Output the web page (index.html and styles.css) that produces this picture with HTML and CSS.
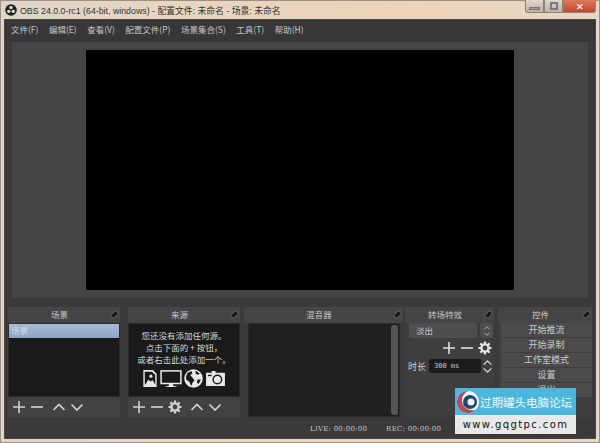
FILE: index.html
```html
<!DOCTYPE html>
<html lang="zh">
<head>
<meta charset="utf-8">
<title>OBS 24.0.0-rc1</title>
<link rel="stylesheet" href="styles.css">
</head>
<body>
<svg class="defs" width="0" height="0">
  <defs>
    <symbol id="i-plus" viewBox="0 0 14 14"><path d="M7 1v12M1 7h12" fill="none" stroke="currentColor" stroke-width="1.6"/></symbol>
    <symbol id="i-minus" viewBox="0 0 14 14"><path d="M1 7h12" fill="none" stroke="currentColor" stroke-width="1.6"/></symbol>
    <symbol id="i-up" viewBox="0 0 14 14"><path d="M1.5 10L7 4.5l5.500 5.500" fill="none" stroke="currentColor" stroke-width="1.7"/></symbol>
    <symbol id="i-down" viewBox="0 0 14 14"><path d="M1.500 4.500L7 10l5.500-5.500" fill="none" stroke="currentColor" stroke-width="1.700"/></symbol>
    <symbol id="i-gear" viewBox="0 0 14 14"><circle cx="7" cy="7" r="3.600" fill="none" stroke="currentColor" stroke-width="2.400"/><path d="M7 .5v3M7 10.500v3M.5 7h3M10.500 7h3M2.400 2.400l2.100 2.100M9.500 9.500l2.100 2.100M11.600 2.400L9.500 4.500M4.500 9.500l-2.100 2.100" stroke="currentColor" stroke-width="2.200"/></symbol>
    <symbol id="i-float" viewBox="0 0 8 8"><path d="M3 .8h4.200v4.200H5.500v2.200H.8V3H3z" fill="#111" stroke="#707070" stroke-width=".7"/></symbol>
  </defs>
</svg>
<div class="window">
  <header class="titlebar">
    <svg class="obs-logo" viewBox="0 0 14 14" width="12" height="12"><circle cx="7" cy="7" r="6.800" fill="#222"/><circle cx="7" cy="4.200" r="2" fill="#ddd"/><circle cx="4.400" cy="8.600" r="2" fill="#ddd"/><circle cx="9.600" cy="8.600" r="2" fill="#ddd"/></svg>
    <span class="title-text">OBS 24.0.0-rc1 (64-bit, windows) - 配置文件: 未命名 - 场景: 未命名</span>
    <div class="win-buttons">
      <span class="win-btn"><i class="glyph-min"></i></span>
      <span class="win-btn"><i class="glyph-max"></i></span>
      <span class="win-btn win-close">✕</span>
    </div>
  </header>
  <div class="client">
    <nav class="menubar">
      <span>文件(F)</span><span>编辑(E)</span><span>查看(V)</span><span>配置文件(P)</span><span>场景集合(S)</span><span>工具(T)</span><span>帮助(H)</span>
    </nav>
    <section class="preview-wrap"><div class="preview"></div></section>
    <section class="docks">
      <article class="dock dock-scene">
        <h2 class="dock-title">场景<svg class="float"><use href="#i-float"/></svg></h2>
        <div class="list">
          <div class="scene-item">场景</div>
        </div>
        <div class="toolbar">
          <svg class="tb"><use href="#i-plus"/></svg>
          <svg class="tb"><use href="#i-minus"/></svg>
          <svg class="tb tb-gap"><use href="#i-up"/></svg>
          <svg class="tb"><use href="#i-down"/></svg>
        </div>
      </article>
      <article class="dock dock-source">
        <h2 class="dock-title">来源<svg class="float"><use href="#i-float"/></svg></h2>
        <div class="list list-source">
          <p class="hint">您还没有添加任何源。<br>点击下面的 + 按钮，<br>或者右击此处添加一个。</p>
          <div class="src-icons">
            <svg viewBox="0 0 16 20" width="16" height="19"><path d="M1 1h10l4 4v14H1z" fill="#e8e8e8"/><path d="M2.500 16.500V3h7.500l3.500 3v10.500z" fill="#1a1a1a"/><path d="M2.500 17l4-6 2 2.500 2-2 3.500 5.500z" fill="#e8e8e8"/><circle cx="9" cy="7.500" r="1.600" fill="#e8e8e8"/></svg>
            <svg viewBox="0 0 24 20" width="22" height="18"><rect x="1" y="1" width="22" height="14" fill="none" stroke="#e8e8e8" stroke-width="1.700"/><path d="M10 15.500h4l1 2.500h3v1H6v-1h3z" fill="#e8e8e8"/></svg>
            <svg viewBox="0 0 18 18" width="19" height="19"><circle cx="9" cy="9" r="8.800" fill="#e8e8e8"/><path d="M3 4l4-2 1 2-2 2 2 2 2 3-2 2-1 3-2-4-3-2 0-3zM11 1.500l4 3-2 1-2-1zM13 10l3 0-2 4-2-1z" fill="#1a1a1a"/></svg>
            <svg viewBox="0 0 22 18" width="21" height="17"><path d="M1 3h6V1h4v2h10v14H1z" fill="#e8e8e8"/><circle cx="13" cy="10" r="4.500" fill="none" stroke="#1a1a1a" stroke-width="1.500"/><rect x="3" y="5" width="4" height="1.500" fill="#1a1a1a"/></svg>
          </div>
        </div>
        <div class="toolbar">
          <svg class="tb"><use href="#i-plus"/></svg>
          <svg class="tb"><use href="#i-minus"/></svg>
          <svg class="tb"><use href="#i-gear"/></svg>
          <svg class="tb tb-gap"><use href="#i-up"/></svg>
          <svg class="tb"><use href="#i-down"/></svg>
        </div>
      </article>
      <article class="dock dock-mixer">
        <h2 class="dock-title">混音器<svg class="float"><use href="#i-float"/></svg></h2>
        <div class="list list-mixer"><div class="scrollbar"></div></div>
      </article>
      <article class="dock dock-trans">
        <h2 class="dock-title">转场特效<svg class="float"><use href="#i-float"/></svg></h2>
        <div class="trans-body">
          <div class="select"><span class="select-text">淡出</span><span class="spin"><svg viewBox="0 0 8 14" width="8" height="12"><path d="M1 5l3-3 3 3M1 9l3 3 3-3" fill="none" stroke="#bbb" stroke-width="1"/></svg></span></div>
          <div class="trans-tools">
            <svg class="tb"><use href="#i-plus"/></svg>
            <svg class="tb"><use href="#i-minus"/></svg>
            <svg class="tb"><use href="#i-gear"/></svg>
          </div>
          <div class="duration">
            <span class="duration-label">时长</span>
            <span class="duration-input">300 ms</span>
            <span class="duration-spin"><svg viewBox="0 0 10 16" width="11" height="15"><path d="M1 6l4-4 4 4M1 10l4 4 4-4" fill="none" stroke="#ddd" stroke-width="1.300"/></svg></span>
          </div>
        </div>
      </article>
      <article class="dock dock-ctrl">
        <h2 class="dock-title">控件<svg class="float"><use href="#i-float"/></svg></h2>
        <div class="ctrl-body">
          <button class="ctrl-btn">开始推流</button>
          <button class="ctrl-btn">开始录制</button>
          <button class="ctrl-btn">工作室模式</button>
          <button class="ctrl-btn">设置</button>
          <button class="ctrl-btn">退出</button>
        </div>
      </article>
    </section>
    <footer class="status"><span class="live">LIVE: 00:00:00</span><span class="rec">REC: 00:00:00</span></footer>
  </div>
</div>
<aside class="watermark">
  <div class="wm-top">
    <svg viewBox="0 0 24 24" width="24" height="24"><circle cx="12" cy="12" r="11" fill="#f0f0f4"/><path d="M12 1a11 11 0 1 0 8 18.500A10 10 0 0 1 12 1z" fill="#b04a5c"/><circle cx="14" cy="12" r="7" fill="#1d4a6a"/><circle cx="15" cy="12" r="3.500" fill="#f0f0f4"/></svg>
    <span>过期罐头电脑论坛</span>
  </div>
  <div class="wm-bottom">www.gqgtpc.com</div>
</aside>
</body>
</html>
```

FILE: styles.css
```css
* { box-sizing: border-box; }
html, body { margin: 0; padding: 0; }
body {
  width: 600px;
  height: 443px;
  overflow: hidden;
  position: relative;
  font-family: "Noto Sans CJK SC", "Liberation Sans", sans-serif;
  background: #e6d4bd;
}
.defs { position: absolute; }
.window {
  width: 600px;
  height: 443px;
  display: flex;
  flex-direction: column;
  padding: 0 5px 5px 5px;
  background: linear-gradient(90deg, #dfd5c9 0%, #e8d5c0 30%, #eed4b8 70%, #e6d8c8 100%);
  box-shadow: inset 0 0 0 1px #9a9184;
}
.titlebar {
  height: 20px;
  flex: none;
  display: flex;
  align-items: center;
  gap: 3px;
  position: relative;
}
.obs-logo { flex: none; }
.title-text {
  font-family: "Liberation Sans", "Noto Sans CJK SC", sans-serif;
  font-size: 8.800px;
  color: #333;
  white-space: nowrap;
}
.win-buttons {
  position: absolute;
  right: -1px;
  top: 0;
  display: flex;
  height: 13px;
}
.win-btn {
  display: flex;
  align-items: center;
  justify-content: center;
  height: 13px;
  width: 19px;
  background: linear-gradient(#e2d6c9, #bdb3a8);
  border: 1px solid #8b8276;
  border-top: 0;
}
.win-btn:first-child { border-radius: 0 0 0 3px; }
.win-close {
  width: 33px;
  background: linear-gradient(#dd7a5f, #c4452e);
  color: #f4ece6;
  font-size: 9px;
  font-weight: 700;
  border-radius: 0 0 3px 0;
}
.glyph-min { width: 11px; height: 3px; margin-top: 4px; background: #9a9ca2; border: 1px solid #777; display: block; }
.glyph-max { width: 8px; height: 8px; border: 2px solid #7b7d84; display: block; }
.client {
  flex: 1;
  min-height: 0;
  display: flex;
  flex-direction: column;
  background: #3a3a3a;
  box-shadow: 0 0 0 1px #4b463f;
}
.menubar {
  height: 22px;
  flex: none;
  display: flex;
  align-items: center;
  gap: 10.500px;
  padding: 0 0 4px 6px;
  font-size: 8.500px;
  color: #c4c4c4;
  background: #373737;
}
.preview-wrap {
  height: 256px;
  flex: none;
  margin: 0 7px;
  background: #454545;
  display: flex;
  align-items: center;
  justify-content: center;
}
.preview { width: 428px; height: 240px; background: #000; }
.docks {
  flex: none;
  display: flex;
  height: 110px;
  margin-top: 9px;
  padding-left: 3px;
}
.dock { display: flex; flex-direction: column; flex: none; }
.dock-scene { width: 112px; margin-right: 8px; }
.dock-source { width: 112px; margin-right: 4px; }
.dock-mixer { width: 159px; margin-right: 2px; }
.dock-trans { width: 89px; margin-right: 4px; }
.dock-ctrl { width: 94px; }
.dock-title {
  height: 16px;
  flex: none;
  margin: 0;
  padding-right: 9px;
  font-size: 8.500px;
  font-weight: 400;
  line-height: 15px;
  color: #c8c8c8;
  background: #454545;
  text-align: center;
  position: relative;
}
.float { position: absolute; right: 2px; top: 4px; width: 7px; height: 7px; }
.list { flex: 1; min-height: 0; background: #1a1a1a; border: 1px solid #2c2c2c; }
.scene-item {
  height: 14px;
  padding-left: 2px;
  font-size: 8.500px;
  line-height: 13px;
  color: #cdd8ea;
  background: linear-gradient(#a9bdd8, #8ba2c2);
}
.list-source {
  display: flex;
  flex-direction: column;
  align-items: center;
  color: #dedede;
}
.hint {
  margin: 5px 0 0;
  font-size: 8.500px;
  line-height: 12px;
  text-align: center;
  color: #d6d6d6;
}
.src-icons { display: flex; align-items: center; gap: 2px; margin-top: 4px; }
.toolbar {
  height: 20px;
  flex: none;
  display: flex;
  align-items: center;
  gap: 4px;
  padding-left: 4px;
  background: #424242;
  color: #d2d2d2;
}
.tb { width: 14px; height: 14px; flex: none; color: #d2d2d2; }
.tb-gap { margin-left: 4px; }
.list-mixer {
  margin: 0 3px 0 4px;
  padding: 1px;
  display: flex;
  justify-content: flex-end;
  background: #202020;
}
.scrollbar { width: 7px; background: #555; border-radius: 3px; }
.trans-body { flex: 1; min-height: 0; background: #3e3e3e; padding: 0 1px 0 4px; }
.select {
  height: 15px;
  display: flex;
  align-items: center;
  font-size: 8.500px;
  color: #c6c6c6;
}
.select-text { flex: 1; background: #4d4d4d; height: 15px; line-height: 15px; padding-left: 7px; border-radius: 2px; margin-right: 3px; }
.spin { width: 13px; height: 15px; background: #4d4d4d; display: flex; align-items: center; justify-content: center; border-radius: 2px; }
.trans-tools { display: flex; justify-content: flex-end; gap: 4px; margin-top: 3px; padding-right: 1px; }
.trans-tools .tb { color: #e0e0e0; }
.duration { display: flex; align-items: center; margin: 4px 0 0 -1px; height: 14px; }
.duration-label { font-size: 9px; color: #d0d0d0; width: 21px; flex: none; }
.duration-input {
  width: 52px;
  height: 14px;
  flex: none;
  background: #1c1c1c;
  color: #c8c8c8;
  font-family: "DejaVu Sans Mono", monospace;
  font-size: 7px;
  line-height: 14px;
  padding-left: 5px;
  border-radius: 2px;
}
.duration-spin { display: flex; margin-left: 1px; }
.ctrl-body { flex: 1; min-height: 0; display: flex; flex-direction: column; gap: 1px; background: #3e3e3e; padding-left: 3px; }
.ctrl-btn {
  height: 14px;
  flex: none;
  border: 0;
  padding: 0;
  font-family: inherit;
  font-size: 9px;
  line-height: 14px;
  color: #c9c9c9;
  background: #4a4a4a;
}
.status {
  flex: none;
  height: 21px;
  padding-top: 2px;
  display: flex;
  align-items: center;
  font-family: "DejaVu Serif", "Liberation Serif", serif;
  font-size: 7px;
  letter-spacing: .25px;
  color: #c4c4c4;
}
.live { margin-left: 305px; }
.rec { margin-left: 19px; }
.watermark {
  position: absolute;
  left: 455px;
  top: 388px;
  width: 121px;
  height: 46px;
  display: flex;
  flex-direction: column;
}
.wm-top {
  height: 27px;
  display: flex;
  align-items: center;
  padding-left: 1px;
  background: #4cb6dc;
  color: #f2f8fb;
  font-size: 11.500px;
  white-space: nowrap;
}
.wm-bottom {
  flex: 1;
  background: #e8e8e8;
  color: #111;
  font-family: "DejaVu Sans", sans-serif;
  font-size: 10px;
  letter-spacing: 1.400px;
  line-height: 19px;
  text-align: center;
}
```
